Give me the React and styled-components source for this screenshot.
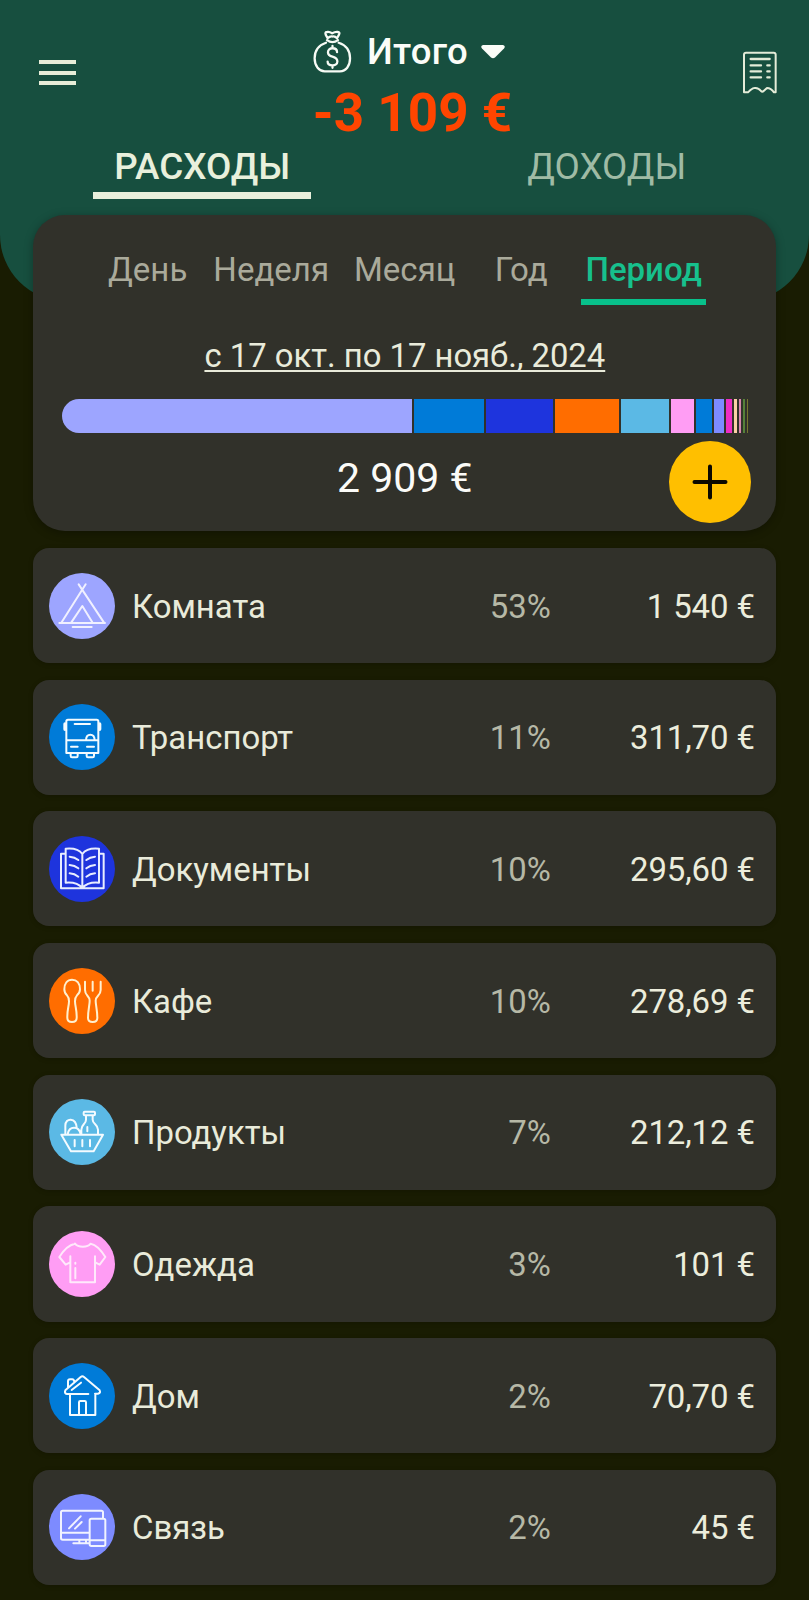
import React from "react";
import styled, { createGlobalStyle } from "styled-components";

const GlobalStyle = createGlobalStyle`
  * { box-sizing: border-box; }
  body {
    margin: 0;
    background: #191c02;
    font-family: Roboto, "Noto Sans", sans-serif;
    color: #e9ebda;
  }
  button { border: 0; padding: 0; background: none; font: inherit; color: inherit; }
`;

const Screen = styled.main`
  width: 809px;
  height: 1600px;
  overflow: hidden;
  background: #191c02;
`;

const Header = styled.header`
  height: 301px;
  background: #174f3f;
  border-radius: 0 0 66px 66px;
`;

const TopBar = styled.div`
  display: grid;
  grid-template-columns: 160px 1fr 160px;
  height: 144px;
`;

const MenuButton = styled.button`
  display: flex;
  flex-direction: column;
  gap: 6.3px;
  align-self: start;
  margin: 60px 0 0 39px;
  width: 37px;
`;

const MenuLine = styled.span`
  height: 4.3px;
  background: #e7edd8;
`;

const ReceiptButton = styled.button`
  justify-self: end;
  align-self: start;
  margin: 50px 30.5px 0 0;
  svg { display: block; }
`;

const Account = styled.div`
  display: flex;
  flex-direction: column;
  align-items: center;
  padding-top: 28px;
`;

const AccountPicker = styled.button`
  display: flex;
  align-items: center;
  height: 46px;
  margin-left: 9px;
  font-size: 36.5px;
  font-weight: 500;
  color: #fbfdf8;
  svg { display: block; }
`;

const AccountName = styled.span`
  margin: 0 13px 0 15px;
  letter-spacing: 0.3px;
`;

const Balance = styled.div`
  margin: 7px 0 0 16px;
  line-height: 64px;
  font-size: 53px;
  font-weight: 700;
  color: #ff4500;
  white-space: nowrap;
`;

const TypeTabs = styled.nav`
  display: grid;
  grid-template-columns: 1fr 1fr;
  justify-items: center;
`;

const TypeTab = styled.button`
  width: 218px;
  height: 55px;
  padding-bottom: 3px;
  line-height: 44px;
  font-size: 36.8px;
  font-weight: ${(p) => (p.$active ? 500 : 400)};
  color: ${(p) => (p.$active ? "#e9f0dc" : "#9fbba5")};
  border-bottom: 7px solid ${(p) => (p.$active ? "#e9f0dc" : "transparent")};
  white-space: nowrap;
`;

const Summary = styled.section`
  position: relative;
  display: flex;
  flex-direction: column;
  align-items: center;
  width: 743px;
  height: 316.5px;
  margin: -86.5px auto 0 33px;
  padding: 32px 28px 0 28.7px;
  border-radius: 32px;
  background: #31312a;
  box-shadow: 0 2px 10px rgba(0, 0, 0, 0.3);
`;

const PeriodTabs = styled.nav`
  display: flex;
  align-self: stretch;
  padding-left: 35.5px;
`;

const PeriodTab = styled.button`
  width: ${(p) => p.$width}px;
  height: 58.5px;
  margin-left: ${(p) => (p.$active ? 4 : 0)}px;
  padding-bottom: 8px;
  line-height: 45px;
  font-size: 33px;
  font-weight: ${(p) => (p.$active ? 500 : 400)};
  color: ${(p) => (p.$active ? "#17c08d" : "#aaaa9b")};
  border-bottom: 6px solid ${(p) => (p.$active ? "#08c18b" : "transparent")};
  white-space: nowrap;
`;

const DateRange = styled.div`
  margin: 29px 0 0;
  height: 65.4px;
  line-height: 44px;
  font-size: 32.8px;
  text-decoration: underline;
  text-decoration-thickness: 2px;
  text-underline-offset: 3px;
  text-decoration-skip-ink: none;
`;

const Bar = styled.div`
  display: flex;
  align-self: stretch;
  gap: 2px;
  height: 33.2px;
  border-radius: 17px 0 0 17px;
  overflow: hidden;
`;

const Segment = styled.span`
  flex: ${(p) => p.$size} 0 0;
  background: ${(p) => p.$color};
`;

const Total = styled.div`
  margin-top: 21px;
  line-height: 48px;
  font-size: 41px;
  color: #fbfbf8;
`;

const AddButton = styled.button`
  position: absolute;
  right: 25px;
  bottom: 8px;
  display: grid;
  place-items: center;
  width: 82px;
  height: 82px;
  padding-right: 1px;
  border-radius: 50%;
  background: #ffbf00;
`;

const List = styled.div`
  display: flex;
  flex-direction: column;
  gap: 16.6px;
  margin: 17px 33px 0;
`;

const Row = styled.article`
  display: grid;
  grid-template-columns: 66px 1fr 120px 204px;
  align-items: center;
  height: 115.1px;
  padding: 0 21.2px 0 16.4px;
  border-radius: 16px;
  background: #31312a;
  box-shadow: 0 1px 5px rgba(0, 0, 0, 0.2);
  font-size: 32.9px;
`;

const IconCircle = styled.span`
  width: 66px;
  height: 66px;
  border-radius: 50%;
  background: ${(p) => p.$color};
  svg { display: block; }
`;

const Name = styled.span`
  padding: 1px 0 0 16.6px;
`;

const Percent = styled.span`
  padding-top: 1px;
  text-align: right;
  color: #b6b8a6;
`;

const Amount = styled.span`
  padding-top: 1px;
  text-align: right;
  letter-spacing: -0.1px;
  color: #eceddc;
`;

const Glyph = ({ d, children, tint = "#f4fbff" }) => (
  <svg width="66" height="66" viewBox="0 0 198 198" fill="none" stroke={tint} strokeWidth="6" strokeLinecap="round" strokeLinejoin="round">
    <path d={d} />
    {children}
  </svg>
);

const icons = {
  tent: <Glyph tint="#f0f0ff" d="M89 34 L165 149 M110 34 L37 149 M31 150 H168 M67 148 L100 99 L130 148 M71 162 H128" />,
  bus: (
    <Glyph d="M57 47 H143 Q148 47 148 52 V147 H52 V52 Q52 47 57 47Z M77 60 H123 M52 109 H148 M111 108 C112 87 136 87 137 108 M66 128 H86 M114 128 H135 M65 148 V156 Q65 160 69 160 H82 Q86 160 86 156 V148 M113 148 V156 Q113 160 117 160 H131 Q135 160 135 156 V148">
      <path d="M48 60 V76 M152 60 V76" strokeWidth="10" />
    </Glyph>
  ),
  book: <Glyph tint="#e8edff" d="M100 54 C90 40 70 36 50 38 V140 C72 138 90 144 100 156 C110 144 128 138 150 140 V38 C130 36 110 40 100 54Z V156 M50 53 H36 V157 H164 V53 H150 M62 62 Q77 63 88 72 M62 87 Q77 88 88 97 M62 112 Q77 113 88 122 M138 62 Q123 63 112 72 M138 87 Q123 88 112 97 M138 112 Q123 113 112 122" />,
  cafe: <Glyph tint="#fff0cf" d="M60 100 C60 88 58 86 54 82 C48 77 46 70 46 64 C46 46 55 35 69 35 C83 35 93 46 93 64 C93 70 90 77 84 82 C80 86 78 88 78 100 C78 114 84 126 83 150 C83 159 78 162 69 162 C60 162 55 159 55 150 C54 126 60 114 60 100Z M108 41 V66 C108 84 122 82 122 98 C122 112 117 126 117 150 C117 159 122 162 131 162 C140 162 145 159 145 150 C145 126 140 112 140 98 C140 82 155 84 155 66 V41 M131 41 V68" />,
  basket: <Glyph d="M37 107 H162 L134 157 H66Z M77 123 V142 M100 123 V142 M123 123 V142 M107 38 H135 Q138 38 138 41 V46 Q138 49 135 49 H107 Q104 49 104 46 V41 Q104 38 107 38Z M111 50 V62 C111 76 97 76 97 92 V106 M131 50 V62 C131 76 147 76 147 92 V106 M115 84 V97 M49 105 V80 C49 55 81 55 83 86 M56 106 C60 80 90 80 95 106" />,
  shirt: <Glyph tint="#ffe9fb" d="M78 38 C87 50 116 50 125 38 C145 42 158 60 169 78 L152 101 L140 95 M138 76 V154 H64 V76 M62 95 L50 101 L31 78 C42 60 57 42 78 38 M79 95 V98 M79 111 V142" />,
  house: <Glyph d="M118 93 H54 Q45 91 49 82 L95 42 Q100 38 105 42 L152 82 Q156 90 147 92 H138 M63 94 V156 H139 V93 M90 155 V118 Q90 114 94 114 H107 Q111 114 111 118 V155 M57 73 V55 Q57 49 63 49 H70 Q75 49 76 57 M68 81 L96 59" />,
  devices: <Glyph tint="#f1f3ff" d="M162 73 V55 Q162 50 157 50 H41 Q36 50 36 55 V132 Q36 137 41 137 H121 M36 116 H121 M127 74 H164 Q169 74 169 79 V151 Q169 156 164 156 H127 Q122 156 122 151 V79 Q122 74 127 74Z M122 139 H169 M91 138 V147 M111 138 V147 M73 148 H121 M60 103 L95 67 M78 104 L98 84" />,
};

const categories = [
  { name: "Комната", percent: "53%", amount: "1 540 €", color: "#9da5ff", icon: "tent" },
  { name: "Транспорт", percent: "11%", amount: "311,70 €", color: "#007bd8", icon: "bus" },
  { name: "Документы", percent: "10%", amount: "295,60 €", color: "#1e34dd", icon: "book" },
  { name: "Кафе", percent: "10%", amount: "278,69 €", color: "#ff6d00", icon: "cafe" },
  { name: "Продукты", percent: "7%", amount: "212,12 €", color: "#5bb9e5", icon: "basket" },
  { name: "Одежда", percent: "3%", amount: "101 €", color: "#ff9df4", icon: "shirt" },
  { name: "Дом", percent: "2%", amount: "70,70 €", color: "#007bd8", icon: "house" },
  { name: "Связь", percent: "2%", amount: "45 €", color: "#7d8bff", icon: "devices" },
];

const segments = [
  [350.3, "#9da5ff"], [70.3, "#007bd8"], [67.5, "#1e34dd"], [63.5, "#ff6d00"],
  [48.2, "#5bb9e5"], [23, "#ff9df4"], [16, "#007bd8"], [10.3, "#7d8bff"],
  [6, "#ee2cc4"], [3, "#fbcfa6"], [1.7, "#d886ae"], [1.9, "#55803a"], [1.3, "#76752f"],
];

const periods = [
  { label: "День", width: 101 },
  { label: "Неделя", width: 146 },
  { label: "Месяц", width: 121 },
  { label: "Год", width: 112 },
  { label: "Период", width: 125, active: true },
];

const MoneyBag = () => (
  <svg width="39" height="43" viewBox="0 0 120 132" fill="none" stroke="#f7fbf5" strokeWidth="7" strokeLinecap="round" strokeLinejoin="round">
    <path d="M45 25 L39 14 Q36 6 44 6 Q51 5 59 10 Q68 5 76 6 Q84 7 80 14 L74 25 Q66 17 60 20 Q54 17 45 25 M43 31 Q60 43 77 31 M40 39 C16 47 5 65 5 87 C5 111 19 127 36 127 H83 C101 127 114 111 114 87 C114 65 104 47 79 39" />
    <path d="M74 68 C74 58 67 56 60 56 C52 56 46 61 46 68 C46 77 53 80 60 82 C67 84 75 88 75 97 C75 104 68 109 60 109 C52 109 45 105 45 97 M60 49 V56 M60 109 V116" />
  </svg>
);

const Receipt = () => (
  <svg width="38" height="44" viewBox="0 0 114 132" fill="none" stroke="#e4ecd8" strokeWidth="5" strokeLinecap="round" strokeLinejoin="round">
    <path d="M15 8 H98 Q104 8 104 14 V127 H99 Q90 114 78 114 L68 123 Q64 127 60 123 Q52 112 40 114 Q34 114 21 127 H9 V14 Q9 8 15 8Z" strokeWidth="6" />
    <path d="M29 27 H86 M29 46 H60 M29 64 H60 M29 82 H60" strokeWidth="7" />
    <path d="M79 46 H86 M79 64 H86 M79 82 H86" strokeWidth="7" />
  </svg>
);

export default function App() {
  return (
    <Screen>
      <GlobalStyle />
      <Header>
        <TopBar>
          <MenuButton aria-label="Меню">
            <MenuLine />
            <MenuLine />
            <MenuLine />
          </MenuButton>
          <Account>
            <AccountPicker>
              <MoneyBag />
              <AccountName>Итого</AccountName>
              <svg width="24" height="15" viewBox="0 0 24 15" fill="#fbfdf8">
                <path d="M2 1 H22 Q25 2 23 4.5 L14 13.5 Q12 15 10 13.5 L1 4.5 Q-1 2 2 1Z" />
              </svg>
            </AccountPicker>
            <Balance>-3 109 €</Balance>
          </Account>
          <ReceiptButton aria-label="Операции">
            <Receipt />
          </ReceiptButton>
        </TopBar>
        <TypeTabs>
          <TypeTab $active>РАСХОДЫ</TypeTab>
          <TypeTab>ДОХОДЫ</TypeTab>
        </TypeTabs>
      </Header>
      <Summary>
        <PeriodTabs>
          {periods.map((p) => (
            <PeriodTab key={p.label} $width={p.width} $active={p.active}>{p.label}</PeriodTab>
          ))}
        </PeriodTabs>
        <DateRange>с 17 окт. по 17 нояб., 2024</DateRange>
        <Bar>
          {segments.map(([size, color], i) => (
            <Segment key={i} $size={size} $color={color} />
          ))}
        </Bar>
        <Total>2 909 €</Total>
        <AddButton aria-label="Добавить">
          <svg width="36" height="36" viewBox="0 0 36 36" stroke="#0b0800" strokeWidth="4" strokeLinecap="round">
            <path d="M18 2.5 V33.5 M2.5 18 H33.5" />
          </svg>
        </AddButton>
      </Summary>
      <List>
        {categories.map((c) => (
          <Row key={c.name}>
            <IconCircle $color={c.color}>{icons[c.icon]}</IconCircle>
            <Name>{c.name}</Name>
            <Percent>{c.percent}</Percent>
            <Amount>{c.amount}</Amount>
          </Row>
        ))}
      </List>
    </Screen>
  );
}
